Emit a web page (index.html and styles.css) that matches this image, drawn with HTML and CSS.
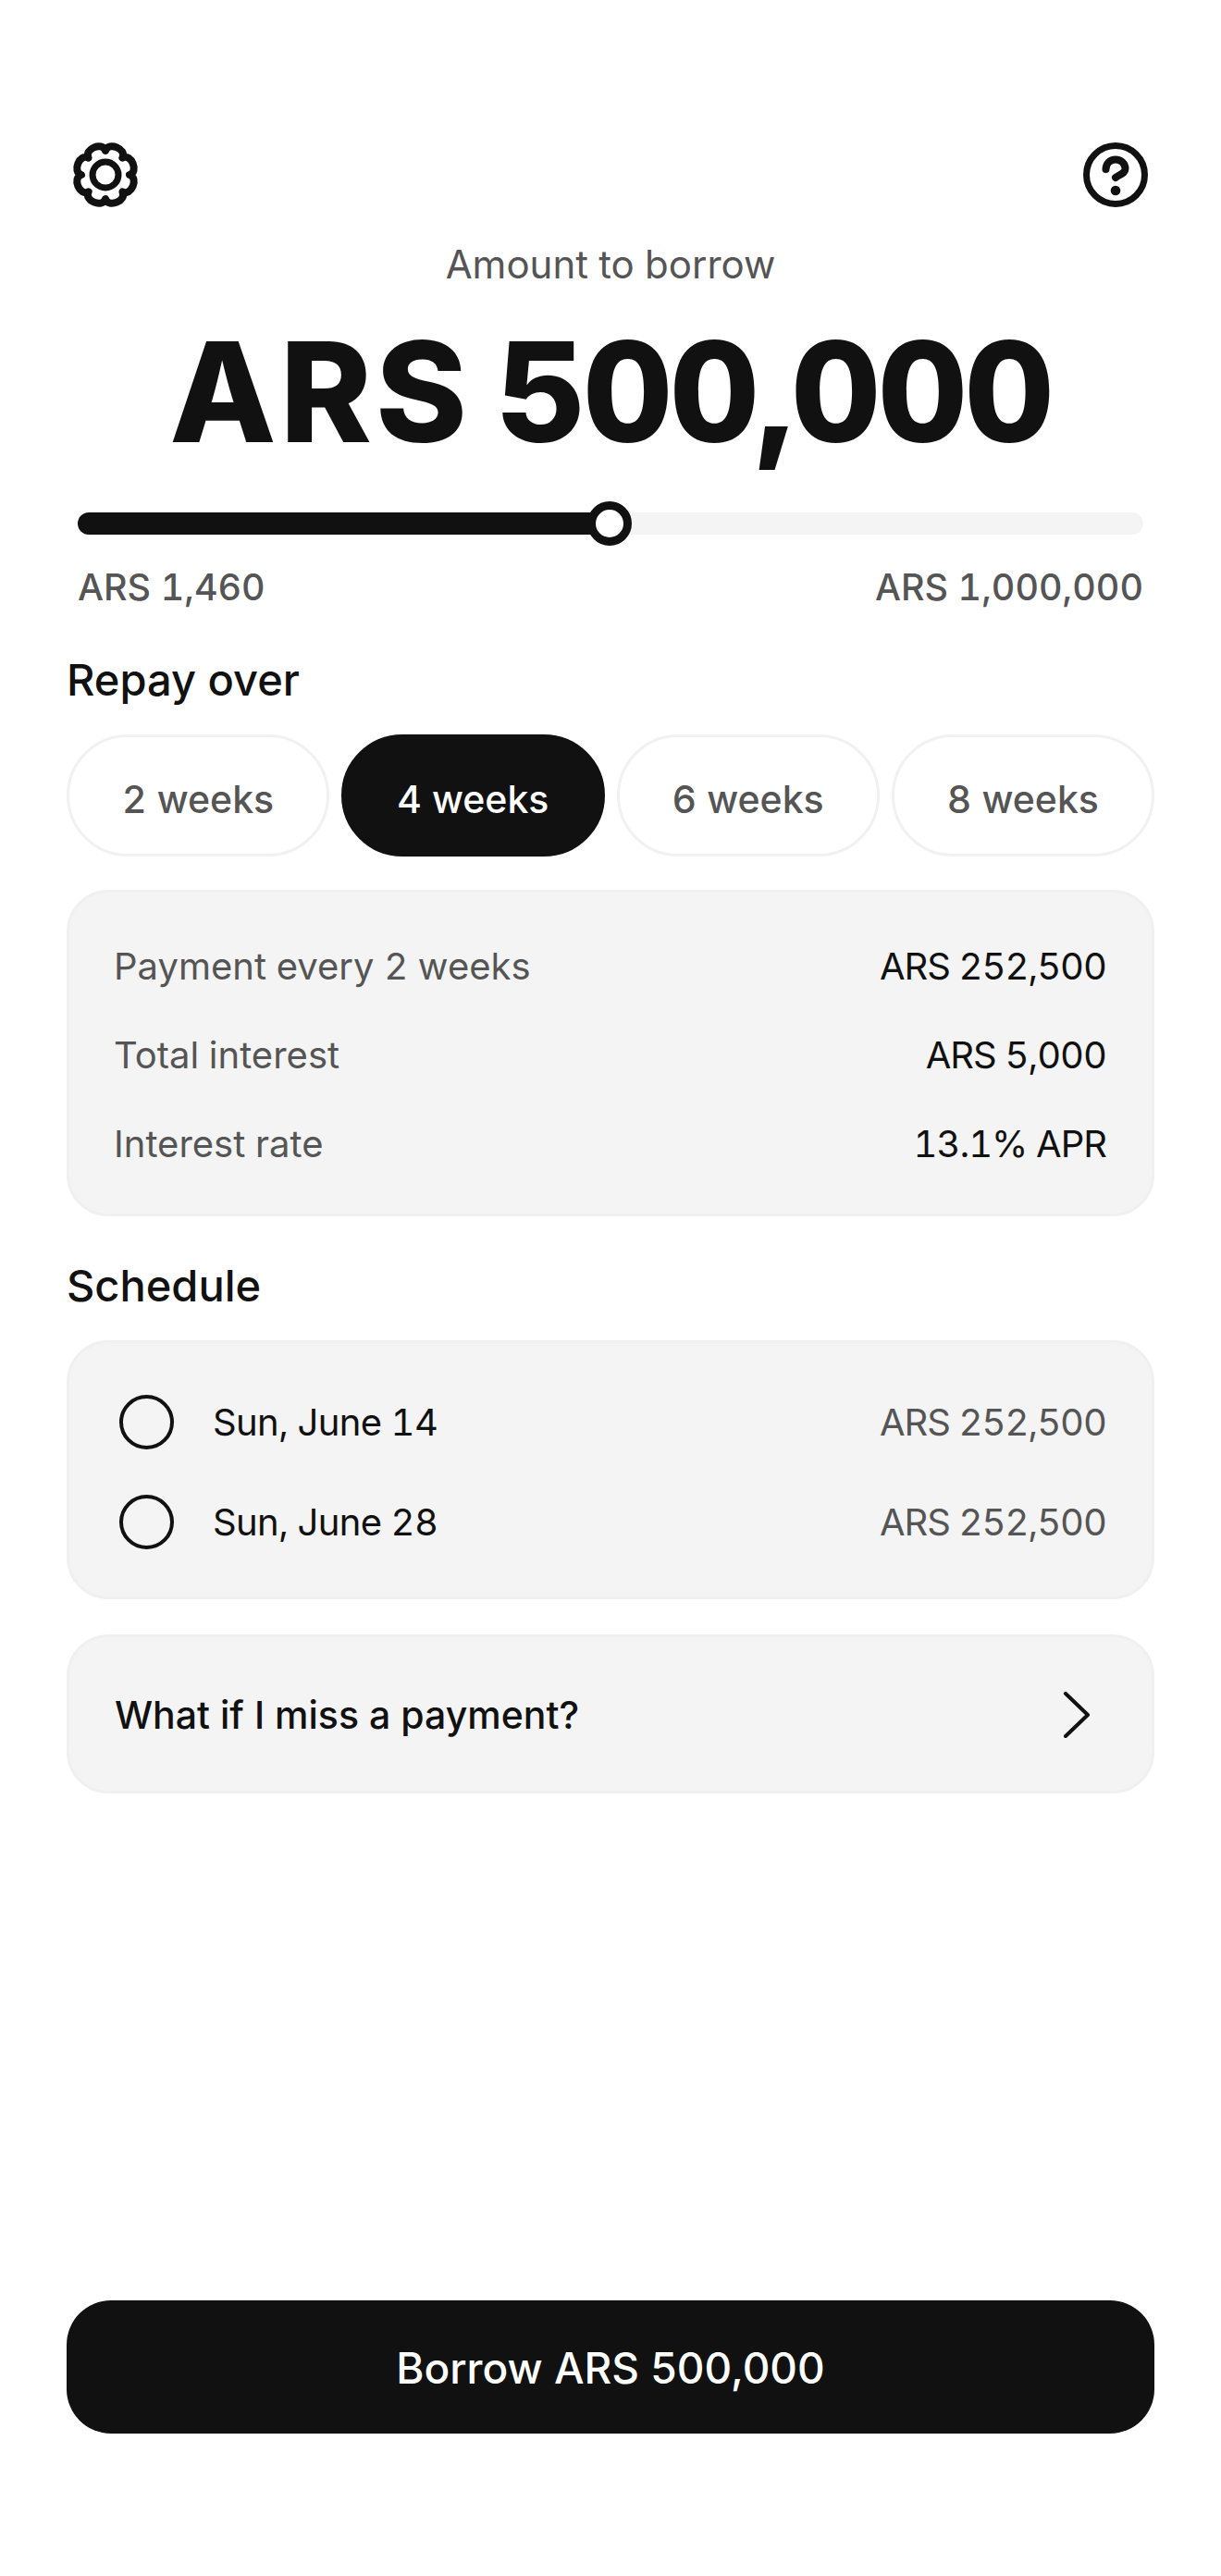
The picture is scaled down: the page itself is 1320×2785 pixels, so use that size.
FILE: index.html
```html
<!DOCTYPE html>
<html lang="en">
<head>
  <meta charset="UTF-8">
  <meta name="viewport" content="width=device-width, initial-scale=1.0">
  <title>Borrow</title>
  <link rel="stylesheet" href="styles.css">
</head>
<body>
  <div class="page">
    <div class="topbar">
      <svg class="icon-gear" viewBox="0 0 72 72" fill="none" stroke="#111" stroke-width="8" stroke-linejoin="round">
        <path d="M36 10C39.180-.36 59.460 8.040 54.380 17.620C63.960 12.540 72.360 32.820 62 36C72.360 39.180 63.960 59.460 54.380 54.380C59.460 63.960 39.180 72.360 36 62C32.820 72.360 12.540 63.960 17.620 54.380C8.040 59.460-.36 39.180 10 36C-.36 32.820 8.040 12.540 17.620 17.620C12.540 8.040 32.820-.36 36 10Z"/>
        <circle cx="36" cy="36" r="14" stroke-width="7"/>
      </svg>
      <svg class="icon-help" viewBox="0 0 72 72" fill="none" stroke="#111" stroke-width="7" stroke-linecap="round">
        <circle cx="36" cy="36" r="31.500"/>
        <path stroke-width="8" d="M25.500 30c0-6 4.500-10.500 10.500-10.500s10.500 4.500 10.500 10c0 5-6 6-10.500 9.500"/>
        <circle cx="36" cy="53" r="5.300" fill="#111" stroke="none"/>
      </svg>
    </div>

    <p class="amount-label">Amount to borrow</p>
    <h1 class="amount"><span class="currency">ARS</span> 500,000</h1>

    <div class="slider">
      <div class="slider-fill"></div>
      <div class="slider-thumb"></div>
    </div>
    <div class="slider-range">
      <span>ARS 1,460</span>
      <span>ARS 1,000,000</span>
    </div>

    <h2 class="section-title">Repay over</h2>
    <div class="pills">
      <div class="pill">2 weeks</div>
      <div class="pill active">4 weeks</div>
      <div class="pill">6 weeks</div>
      <div class="pill">8 weeks</div>
    </div>

    <div class="card details">
      <div class="row"><span class="muted">Payment every 2 weeks</span><span class="money">ARS 252,500</span></div>
      <div class="row"><span class="muted">Total interest</span><span class="money">ARS 5,000</span></div>
      <div class="row"><span class="muted">Interest rate</span><span class="money">13.1% APR</span></div>
    </div>

    <h2 class="section-title schedule-title">Schedule</h2>
    <div class="card schedule">
      <div class="row">
        <div class="date"><span class="radio"></span>Sun, June 14</div>
        <span class="muted money">ARS 252,500</span>
      </div>
      <div class="row">
        <div class="date"><span class="radio"></span>Sun, June 28</div>
        <span class="muted money">ARS 252,500</span>
      </div>
    </div>

    <div class="card miss">
      <span>What if I miss a payment?</span>
      <svg class="icon-chevron" viewBox="0 0 30 50" fill="none" stroke="#111" stroke-width="4" stroke-linecap="round" stroke-linejoin="round">
        <path d="M3 2l24 23L3 48"/>
      </svg>
    </div>

    <button class="borrow">Borrow ARS 500,000</button>
  </div>
</body>
</html>
```

FILE: styles.css
```css
* {
  box-sizing: border-box;
}

body {
  margin: 0;
  background: #fff;
  color: #111;
  font-family: Inter, "Liberation Sans", sans-serif;
  font-feature-settings: "tnum";
}

.page {
  height: 2785px;
  padding: 153px 72px 154px;
  display: flex;
  flex-direction: column;
}

/* top icons */
.topbar {
  display: flex;
  justify-content: space-between;
  padding: 0 6px;
}

.icon-gear,
.icon-help {
  width: 72px;
  height: 72px;
  display: block;
}

.amount-label {
  margin: 34px 0 0;
  text-align: center;
  font-size: 42px;
  line-height: 54px;
  color: #555;
}

.amount {
  margin: 25px 0 0;
  text-align: center;
  font-size: 150px;
  line-height: 172px;
  font-weight: 800;
  letter-spacing: -3px;
}

.currency {
  letter-spacing: 4px;
  margin-right: -10px;
}

/* slider */
.slider {
  position: relative;
  height: 24px;
  margin: 44px 12px 0;
  background: #f4f4f4;
  border-radius: 12px;
}

.slider-fill {
  width: 50%;
  height: 100%;
  background: #111;
  border-radius: 12px 0 0 12px;
}

.slider-thumb {
  position: absolute;
  left: 50%;
  top: -12px;
  width: 48px;
  height: 48px;
  margin-left: -25px;
  background: #fff;
  border: 9px solid #111;
  border-radius: 50%;
}

.slider-range {
  display: flex;
  justify-content: space-between;
  margin: 32px 12px 0;
  font-size: 39.5px;
  font-weight: 500;
  line-height: 50px;
  color: #555;
}

.section-title {
  margin: 45px 0 0;
  font-size: 47px;
  line-height: 60px;
  font-weight: 500;
}

/* term pills */
.pills {
  display: flex;
  gap: 13px;
  margin-top: 29px;
}

.pill {
  flex: 1;
  height: 132px;
  padding-top: 7px;
  display: flex;
  align-items: center;
  justify-content: center;
  border: 3px solid #f1f1f1;
  border-radius: 66px;
  font-size: 41px;
  font-weight: 500;
  color: #555;
}

.pill.active {
  background: #111;
  border-color: #111;
  color: #fff;
}

/* cards */
.card {
  background: #f4f4f4;
  border: 3px solid #f0f0f0;
  border-radius: 45px;
}

.row {
  display: flex;
  justify-content: space-between;
  align-items: center;
  flex-shrink: 0;
  font-size: 40px;
}

.muted {
  color: #555;
}

.money {
  letter-spacing: -1px;
}

.details {
  margin-top: 36px;
  height: 353px;
  padding: 31px 49px 27px 48px;
}

.details .row {
  height: 96px;
}

.schedule-title {
  margin-top: 45px;
}

.schedule {
  margin-top: 29px;
  height: 280px;
  padding: 31px 49px 29px 54px;
}

.schedule .row {
  height: 108px;
}

.date {
  display: flex;
  align-items: center;
  gap: 42px;
  letter-spacing: -0.6px;
}

.radio {
  width: 59px;
  height: 59px;
  border: 4.5px solid #111;
  border-radius: 50%;
}

.miss {
  margin-top: 38px;
  height: 172px;
  padding: 2px 66px 0 49px;
  display: flex;
  justify-content: space-between;
  align-items: center;
  font-size: 41px;
  font-weight: 500;
}

.icon-chevron {
  width: 30px;
  height: 50px;
  display: block;
}

.borrow {
  margin-top: auto;
  height: 144px;
  padding-top: 2px;
  border: 0;
  border-radius: 48px;
  background: #111;
  color: #fff;
  font-family: inherit;
  font-size: 46px;
  font-weight: 500;
}
```
